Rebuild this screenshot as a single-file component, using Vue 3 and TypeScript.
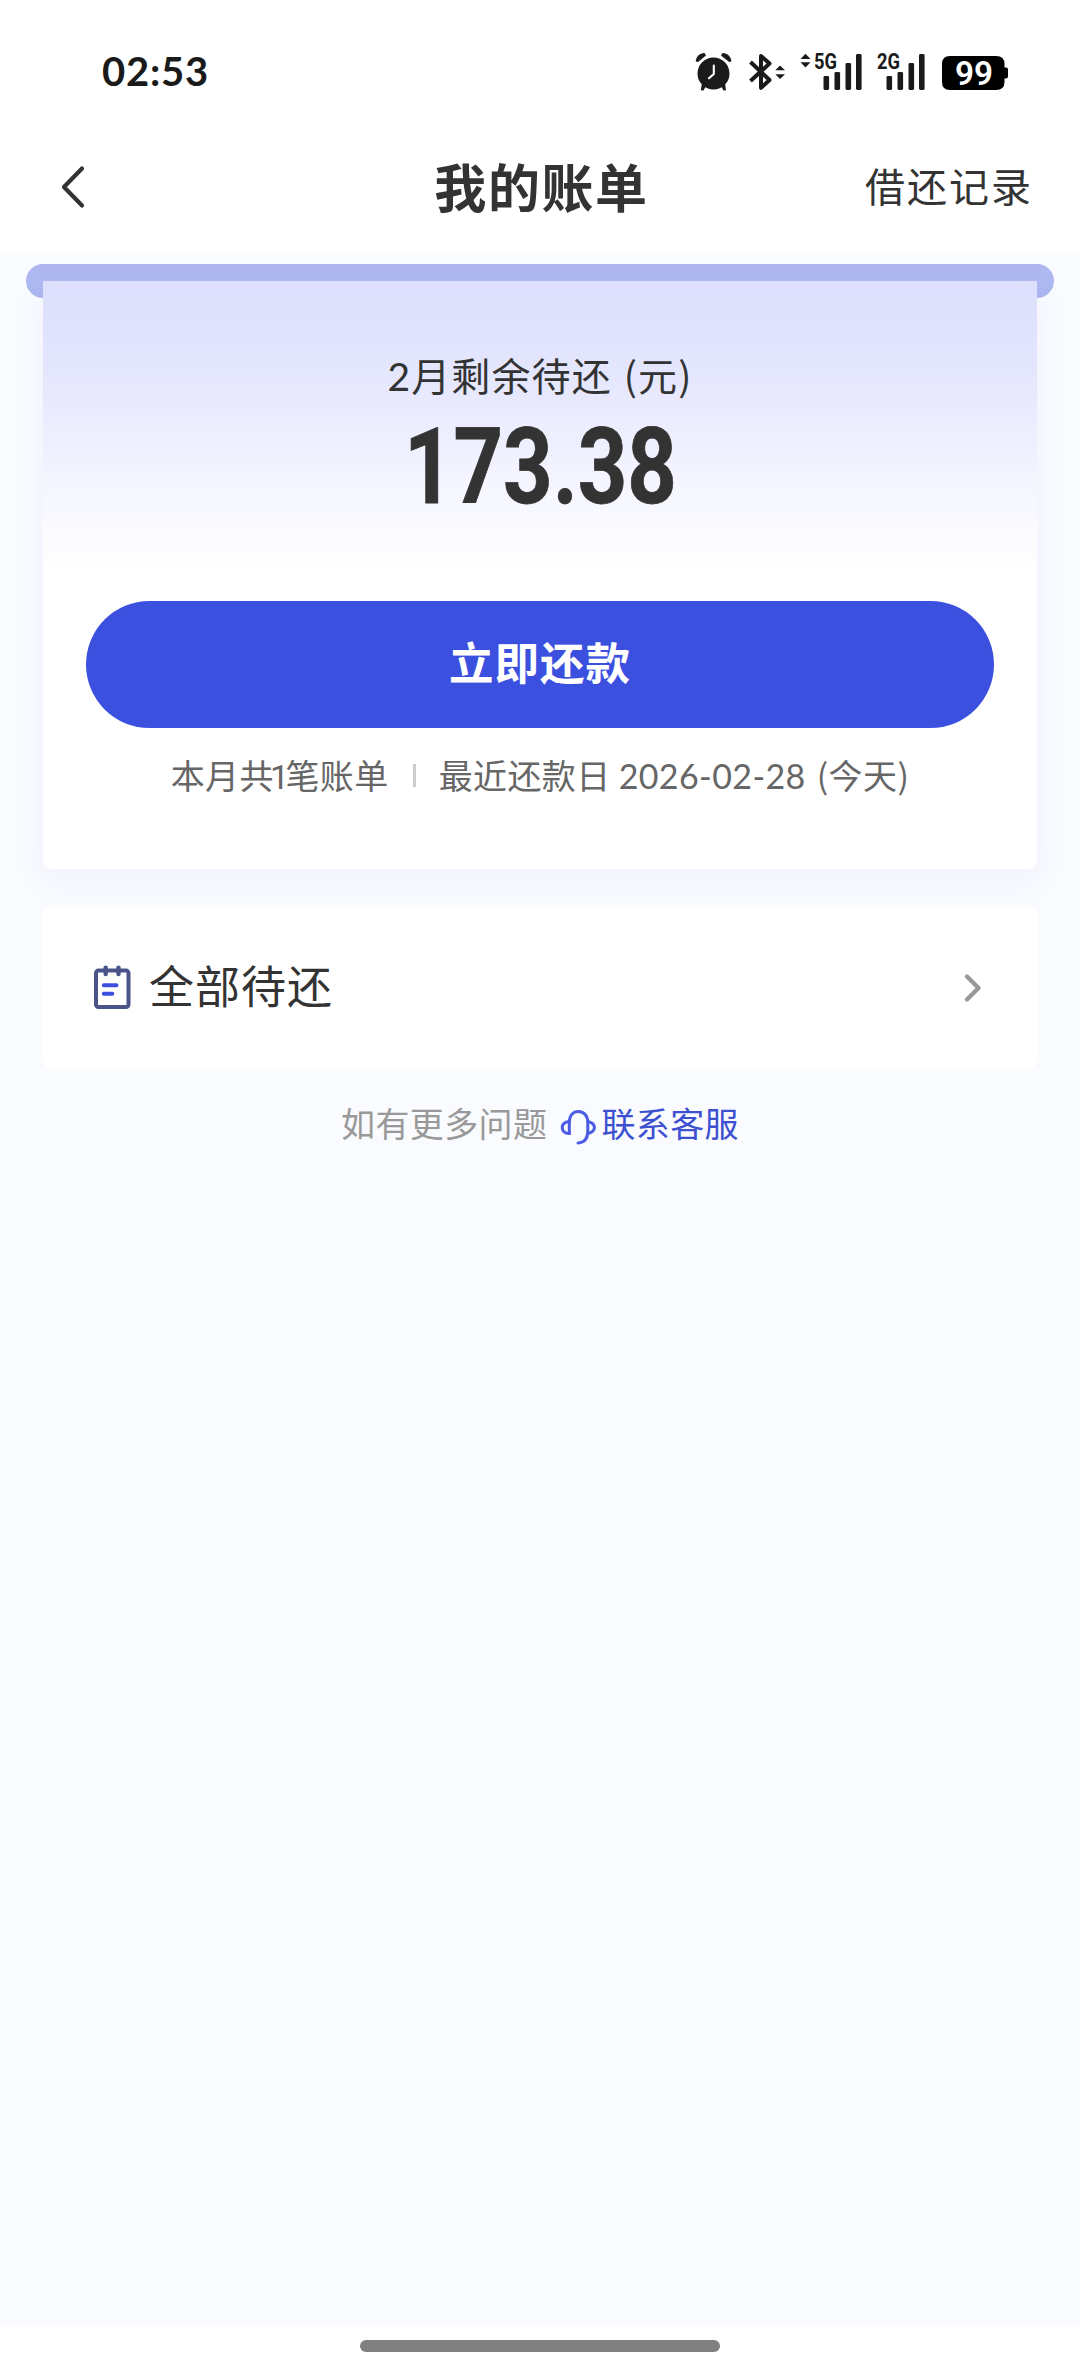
<script setup lang="ts">
interface Bar { x: number; y: number }

const bars: Bar[] = [
  { x: 0, y: 22 },
  { x: 11, y: 18 },
  { x: 22, y: 9 },
  { x: 32.5, y: 0 },
]
const bill = {
  month: '2',
  amount: '173.38',
  count: '1',
  due: '2026-02-28',
}
</script>

<template>
  <div class="page">
    <div class="status">
      <span class="clock">02:53</span>
      <svg class="sys" width="340" height="60" viewBox="0 0 340 60">
        <g fill="#1a1a1a" stroke="none">
          <circle cx="33.5" cy="33.5" r="16" />
          <path d="M15.8 21.5C15.5 17 20 12.8 24.5 13L26 15.4L18 22Z" />
          <path d="M51.3 21.5C51.5 17 47 12.8 42.5 13L41 15.4L49.2 22Z" />
          <path d="M22 43L26 46L23.5 50.5L20.8 50.3Z M45 43L41 46L43.5 50.5L46 50.3Z" />
        </g>
        <path d="M33.8 25.5V34L29 38.3" fill="none" stroke="#fff" stroke-width="2.1" stroke-linecap="round" stroke-linejoin="round" />
        <path d="M70.5 22L89.5 40L81 47.8V16L89.5 23.5L70.5 41" fill="none" stroke="#1a1a1a" stroke-width="4" stroke-linejoin="round" />
        <path d="M95.3 30.2L100 25.4L105 30.2Z M95.3 34.2L100 39L105 34.2Z M120.5 19L125.5 13.8L130.5 19Z M120.5 22.3L125.5 27.5L130.5 22.3Z" fill="#1a1a1a" />
        <text x="134" y="28.6" class="net" textLength="23" lengthAdjust="spacingAndGlyphs">5G</text>
        <text x="197" y="28.6" class="net" textLength="23" lengthAdjust="spacingAndGlyphs">2G</text>
        <g v-for="start in [143.5, 206.5]" :key="start" fill="#1a1a1a">
          <rect v-for="b in bars" :key="b.x" :x="start + b.x" :y="14 + b.y" width="5.6" :height="36 - b.y" rx="1.4" />
        </g>
        <path d="M270 16H316Q324.5 16 324.5 24V27.5H326Q328 27.5 328 29.5V36.5Q328 38.5 326 38.5H324.5V42Q324.5 50 316 50H270Q262 50 262 42V24Q262 16 270 16Z" fill="#000" />
        <text x="275" y="44.6" class="level" textLength="38" lengthAdjust="spacingAndGlyphs">99</text>
      </svg>
    </div>

    <header class="nav">
      <svg class="back" width="24" height="44" viewBox="0 0 24 44">
        <path d="M21 3.5L3 22L21 40.5" fill="none" stroke="#333" stroke-width="4.2" stroke-linecap="round" stroke-linejoin="round" />
      </svg>
      <h1>我的账单</h1>
      <span class="history">借还记录</span>
    </header>

    <main class="content">
      <div class="slot"></div>
      <section class="card">
        <div class="label"><span class="num">{{ bill.month }}</span>月剩余待还<span class="paren open">(</span>元<span class="paren">)</span></div>
        <div class="amount"><span>{{ bill.amount }}</span></div>
        <button class="pay">立即还款</button>
        <div class="meta">
          <span>本月共<span class="one">{{ bill.count }}</span>笔账单</span>
          <i class="divider"></i>
          <span>最近还款日<span class="num date">{{ bill.due }}</span><span class="paren">(</span>今天<span class="paren">)</span></span>
        </div>
      </section>

      <section class="row">
        <svg width="38" height="44" viewBox="0 0 38 44">
          <g fill="none" stroke-linecap="round" stroke-linejoin="round">
            <rect x="3" y="5.6" width="32.5" height="36.4" rx="2.5" stroke="#4a5488" stroke-width="4" />
            <path d="M12.7 2.6V9M25.5 2.6V9" stroke="#4a5488" stroke-width="4.4" />
            <path d="M10.8 20.3H23.5M10.8 28.8H19.3" stroke="#3c50e0" stroke-width="4" />
          </g>
        </svg>
        <span class="row-title">全部待还</span>
        <svg class="arrow" width="18" height="30" viewBox="0 0 18 30">
          <path d="M3 3.5L14.5 15L3 26.5" fill="none" stroke="#999" stroke-width="4.4" stroke-linecap="round" stroke-linejoin="round" />
        </svg>
      </section>

      <div class="help">
        <span>如有更多问题</span>
        <svg width="36" height="36" viewBox="0 0 36 36" fill="none" stroke="#4a5de4" stroke-width="3" stroke-linecap="round" stroke-linejoin="round">
          <path d="M9.3 24.5V13.5C9.3 6.5 13 2.5 18.5 2.5S27.8 7 27.8 13.5V22C27.8 29.5 24 33.6 18 34" />
          <path d="M9.3 12.5C4.5 13 2.2 15.5 2.2 18.8S5 24.7 9.3 24.5" />
          <path d="M28 12.5C32 13.5 34.4 15.5 34.4 18.5S32 23.5 28 24.5" />
        </svg>
        <a>联系客服</a>
      </div>
    </main>
    <footer class="gesture"><i></i></footer>
  </div>
</template>

<style>
body { margin: 0; background: #fff; }
</style>

<style scoped>
.page {
  width: 1080px;
  height: 2373px;
  display: flex;
  flex-direction: column;
  overflow: hidden;
  background: #fff;
  color: #333;
  font-family: "Noto Sans CJK SC", sans-serif;
}
.status {
  height: 120px;
  display: flex;
  justify-content: space-between;
  padding: 0 60px 0 102px;
  box-sizing: border-box;
  flex: none;
}
.clock {
  margin-top: 41px;
  font: 700 40px/60px Lato, sans-serif;
  letter-spacing: 0.8px;
  color: #1a1a1a;
}
.sys { margin-top: 40px; }
.net { font: 700 21.5px Roboto, sans-serif; fill: #1a1a1a; }
.level { font: 600 32.5px Roboto, sans-serif; fill: #fff; }
.nav {
  height: 133px;
  flex: none;
  display: grid;
  grid-template-columns: 1fr auto 1fr;
  align-items: center;
  padding: 0 49px 0 61px;
  box-sizing: border-box;
}
h1 {
  margin: -2px 0 0 -9px;
  font-size: 52px;
  line-height: 70px;
  letter-spacing: 1.6px;
  font-weight: 700;
}
.history {
  justify-self: end;
  font-size: 40px;
  letter-spacing: 2px;
  margin: -4px -2px 0 0;
}
.content {
  flex: 1;
  background: #fafbff;
  padding: 11px 26px 0;
}
.slot {
  height: 34px;
  border-radius: 17px;
  background: linear-gradient(#afb6ef, #aebaf2 60%, #adb6f0);
}
.card {
  position: relative;
  margin: -17px 17px 0;
  height: 588px;
  padding: 63px 43px 0;
  box-sizing: border-box;
  border-radius: 0 0 9px 9px;
  background: linear-gradient(#dce0fd, #dfe3fd 18%, #e8e9fd 41%, #f3f4ff 66%, #fbfbff 87%, #fff 100%) 0 0 / 100% 290px no-repeat, #fff;
  box-shadow: 0 10px 36px rgba(60, 80, 180, 0.05);
}
.num { font-family: Lato, sans-serif; }
.label {
  height: 60px;
  line-height: 60px;
  font-size: 39px;
  letter-spacing: 1.1px;
  text-align: center;
}
.paren.open { margin-left: 12px; }
.amount {
  height: 110px;
  margin-top: 5px;
  display: flex;
  justify-content: center;
  font: 700 106px/116px Roboto, sans-serif;
}
.amount span {
  transform: scaleX(0.815);
  -webkit-text-stroke: 0.8px #333;
}
.pay {
  display: block;
  width: 908px;
  height: 127px;
  margin-top: 82px;
  padding: 0 0 8px;
  border: 0;
  border-radius: 64px;
  background: #3c50e0;
  color: #fff;
  font: 700 44.5px/119px "Noto Sans CJK SC", sans-serif;
  letter-spacing: 1px;
}
.meta {
  display: flex;
  justify-content: center;
  align-items: center;
  height: 60px;
  margin-top: 16px;
  font-size: 34px;
  letter-spacing: 0.4px;
  color: #666;
  white-space: nowrap;
}
.one { font-family: Roboto, sans-serif; margin: 0 -4px 0 -4px; }
.num.date { margin: 0 11px 0 8px; }
.divider {
  width: 3px;
  height: 23px;
  margin: 2px 23px 0 24px;
  background: #ccc;
}
.row {
  position: relative;
  display: flex;
  align-items: center;
  height: 164px;
  margin: 36px 17px 0;
  padding: 0 55px 0 50px;
  box-sizing: border-box;
  border-radius: 9px;
  background: #fff;
}
.row-title {
  margin: -6px 0 0 18px;
  font-size: 45px;
  letter-spacing: 1px;
}
.arrow { margin-left: auto; margin-top: 2px; }
.help {
  display: flex;
  justify-content: center;
  align-items: center;
  margin-top: 23px;
  height: 60px;
  font-size: 34px;
  letter-spacing: 0.4px;
  color: #999;
}
.help svg { margin: 10px 5px 0 13px; }
.help a { color: #3c50d0; }
.gesture {
  flex: none;
  height: 48px;
  display: flex;
  justify-content: center;
  background: #fff;
}
.gesture i {
  width: 360px;
  height: 12px;
  margin-top: 15px;
  border-radius: 6px;
  background: #808080;
}
</style>
